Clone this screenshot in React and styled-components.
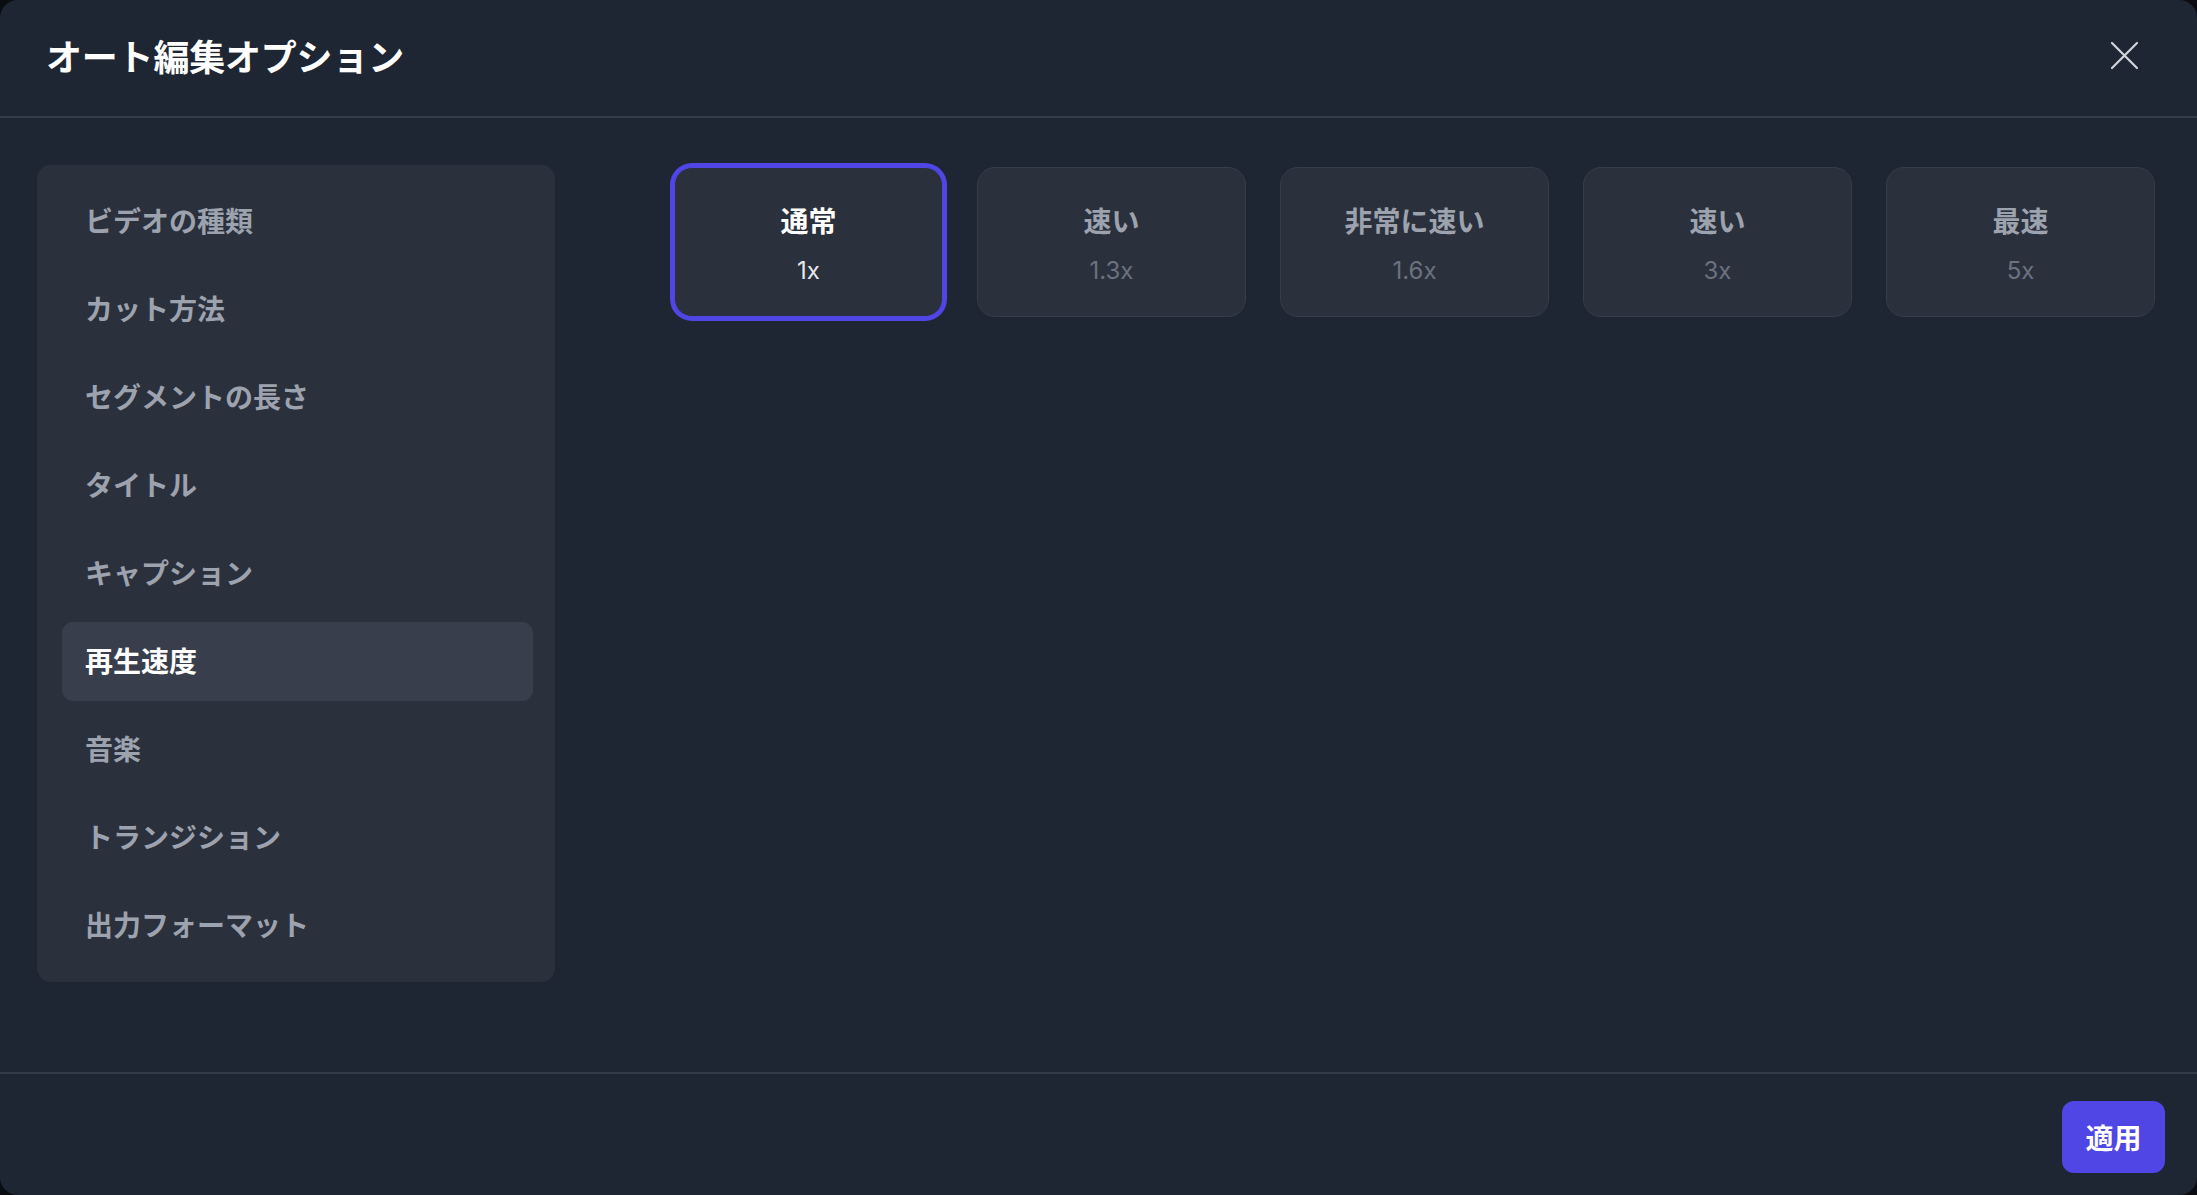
import React, { useState } from "react";
import styled, { createGlobalStyle } from "styled-components";

const Global = createGlobalStyle`
  html, body { margin: 0; padding: 0; background: #0b0d12; }
  body { font-family: Inter, "Noto Sans CJK JP", "Noto Sans", sans-serif; }
  * { box-sizing: border-box; }
`;

const Modal = styled.div`
  width: 2197px;
  height: 1195px;
  background: #1f2633;
  border-radius: 18px;
  display: flex;
  flex-direction: column;
  overflow: hidden;
`;

const Header = styled.header`
  height: 118px;
  flex: none;
  display: flex;
  align-items: center;
  justify-content: space-between;
  padding: 0 57px 6px 46px;
  border-bottom: 2px solid #353c49;
`;

const Title = styled.h1`
  margin: 0;
  font-family: "Noto Sans CJK JP", sans-serif;
  font-size: 36px;
  font-weight: 700;
  color: #ffffff;
  letter-spacing: -0.2px;
`;

const CloseButton = styled.button`
  width: 31px;
  height: 31px;
  padding: 0;
  border: none;
  background: transparent;
  display: flex;
  align-items: center;
  justify-content: center;
  cursor: pointer;
`;

const Body = styled.main`
  flex: 1;
  display: flex;
  align-items: flex-start;
  gap: 119px;
  padding: 47px 42px 0 37px;
`;

const Sidebar = styled.nav`
  width: 518px;
  flex: none;
  background: #2a303c;
  border-radius: 14px;
  padding: 17px 22px 17px 25px;
  display: flex;
  flex-direction: column;
  gap: 9px;
`;

const NavItem = styled.button`
  height: 79px;
  border: none;
  border-radius: 11px;
  padding: 0 0 4px 23px;
  text-align: left;
  background: ${(p) => (p.$active ? "#383e4b" : "transparent")};
  color: ${(p) => (p.$active ? "#ffffff" : "#9ca3af")};
  font-family: "Noto Sans CJK JP", sans-serif;
  font-size: 28px;
  font-weight: 700;
  cursor: pointer;
`;

const Options = styled.div`
  flex: 1;
  display: flex;
  gap: 34px;
  padding-top: 2px;
`;

const SpeedCard = styled.button`
  width: 269px;
  height: 150px;
  flex: none;
  border-radius: 18px;
  background: #2a303c;
  border: 1px solid ${(p) => (p.$selected ? "#4f46e5" : "#363c49")};
  box-shadow: ${(p) => (p.$selected ? "0 0 0 4px #4f46e5" : "none")};
  display: flex;
  flex-direction: column;
  align-items: center;
  justify-content: center;
  gap: 16px;
  padding: 2px 0 0;
  cursor: pointer;
`;

const CardTitle = styled.span`
  font-family: "Noto Sans CJK JP", sans-serif;
  font-size: 28px;
  font-weight: 700;
  line-height: 40px;
  color: ${(p) => (p.$selected ? "#ffffff" : "#9ca3af")};
`;

const CardValue = styled.span`
  font-family: Inter, "Noto Sans", sans-serif;
  font-size: 24px;
  font-weight: 400;
  line-height: 30px;
  color: ${(p) => (p.$selected ? "#e5e7eb" : "#6b7280")};
`;

const Footer = styled.footer`
  height: 123px;
  flex: none;
  border-top: 2px solid #353c49;
  display: flex;
  align-items: center;
  justify-content: flex-end;
  padding: 4px 32px 0 0;
`;

const ApplyButton = styled.button`
  width: 103px;
  height: 72px;
  border: none;
  border-radius: 12px;
  background: #4f46e5;
  color: #ffffff;
  font-family: "Noto Sans CJK JP", sans-serif;
  font-size: 28px;
  font-weight: 700;
  cursor: pointer;
`;

const navItems = [
  "ビデオの種類",
  "カット方法",
  "セグメントの長さ",
  "タイトル",
  "キャプション",
  "再生速度",
  "音楽",
  "トランジション",
  "出力フォーマット",
];

const speeds = [
  { label: "通常", value: "1x" },
  { label: "速い", value: "1.3x" },
  { label: "非常に速い", value: "1.6x" },
  { label: "速い", value: "3x" },
  { label: "最速", value: "5x" },
];

export default function App() {
  const [active, setActive] = useState(5);
  const [speed, setSpeed] = useState(0);
  return (
    <>
      <Global />
      <Modal>
        <Header>
          <Title>オート編集オプション</Title>
          <CloseButton aria-label="close">
            <svg width="29" height="29" viewBox="0 0 29 29" fill="none">
              <path d="M2 2 L27 27 M27 2 L2 27" stroke="#d1d5db" strokeWidth="2.2" strokeLinecap="round" />
            </svg>
          </CloseButton>
        </Header>
        <Body>
          <Sidebar>
            {navItems.map((n, i) => (
              <NavItem key={n} $active={i === active} onClick={() => setActive(i)}>
                {n}
              </NavItem>
            ))}
          </Sidebar>
          <Options>
            {speeds.map((s, i) => (
              <SpeedCard key={i} $selected={i === speed} onClick={() => setSpeed(i)}>
                <CardTitle $selected={i === speed}>{s.label}</CardTitle>
                <CardValue $selected={i === speed}>{s.value}</CardValue>
              </SpeedCard>
            ))}
          </Options>
        </Body>
        <Footer>
          <ApplyButton>適用</ApplyButton>
        </Footer>
      </Modal>
    </>
  );
}
